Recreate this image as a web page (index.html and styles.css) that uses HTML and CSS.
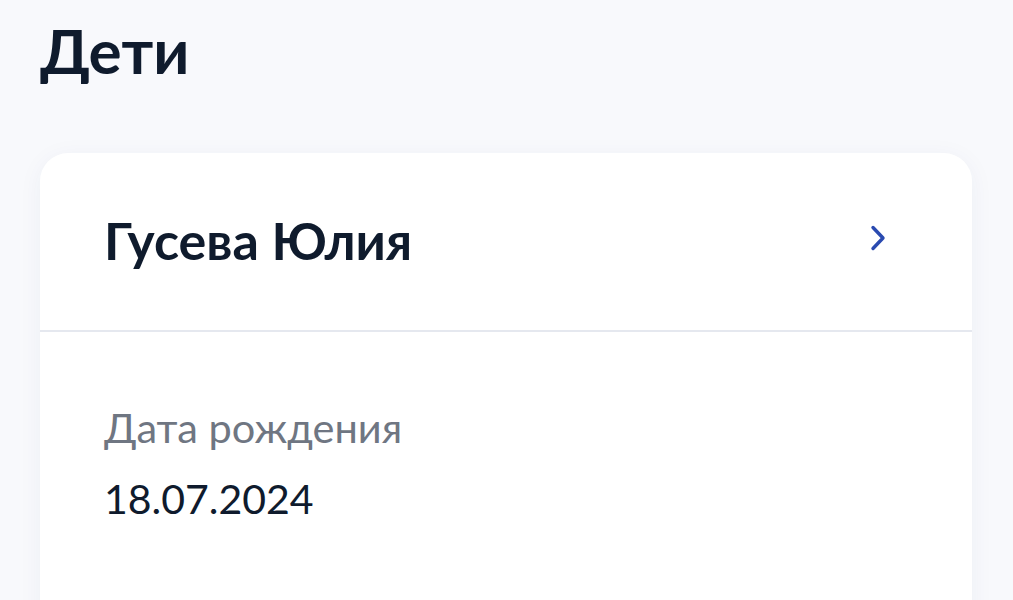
FILE: index.html
```html
<!DOCTYPE html>
<html lang="ru">
<head>
    <meta charset="UTF-8">
    <meta name="viewport" content="width=device-width, initial-scale=1.0">
    <title>Дети</title>
    <link rel="stylesheet" href="styles.css">
</head>
<body>
    <div class="page">
        <h1 class="page-title">Дети</h1>

        <div class="child-card">
            <a href="#" class="child-head">
                <span class="child-name">Гусева Юлия</span>
                <svg class="chevron" width="16" height="26" viewBox="0 0 16 26" aria-hidden="true">
                    <path d="M3 2.5 L13 13 L3 23.5" fill="none" stroke="#2a4ab0" stroke-width="3.4" stroke-linecap="round" stroke-linejoin="round"/>
                </svg>
            </a>

            <div class="child-info">
                <p class="info-label">Дата рождения</p>
                <p class="info-value">18.07.2024</p>
            </div>
        </div>
    </div>
</body>
</html>
```

FILE: styles.css
```css
body {
    font-family: Lato, "Liberation Sans", sans-serif;
    margin: 0;
    padding: 0;
    background-color: #f8f9fc;
    color: #0f1b2d;
}

.page {
    padding: 0 41px 0 40px;
}

.page-title {
    margin: 0;
    padding-top: 10px;
    font-size: 62px;
    font-weight: 700;
    line-height: 80px;
}

.child-card {
    margin-top: 63px;
    background: #fff;
    border-radius: 28px;
    box-shadow: 0 4px 24px rgba(40, 60, 120, 0.05);
    min-height: 500px;
}

.child-head {
    display: flex;
    align-items: center;
    justify-content: space-between;
    height: 177px;
    padding: 0 86px 0 64px;
    border-bottom: 2px solid #e5e8ef;
    text-decoration: none;
    color: inherit;
}

.child-name {
    font-size: 52px;
    font-weight: 700;
    margin-top: -3px;
}

.chevron {
    margin-top: -8px;
}

.child-info {
    padding: 70px 64px 0;
}

.info-label {
    margin: 0;
    font-size: 41.5px;
    color: #6f7682;
    line-height: 50px;
}

.info-value {
    margin: 22px 0 0;
    font-size: 41px;
    line-height: 50px;
}
```
